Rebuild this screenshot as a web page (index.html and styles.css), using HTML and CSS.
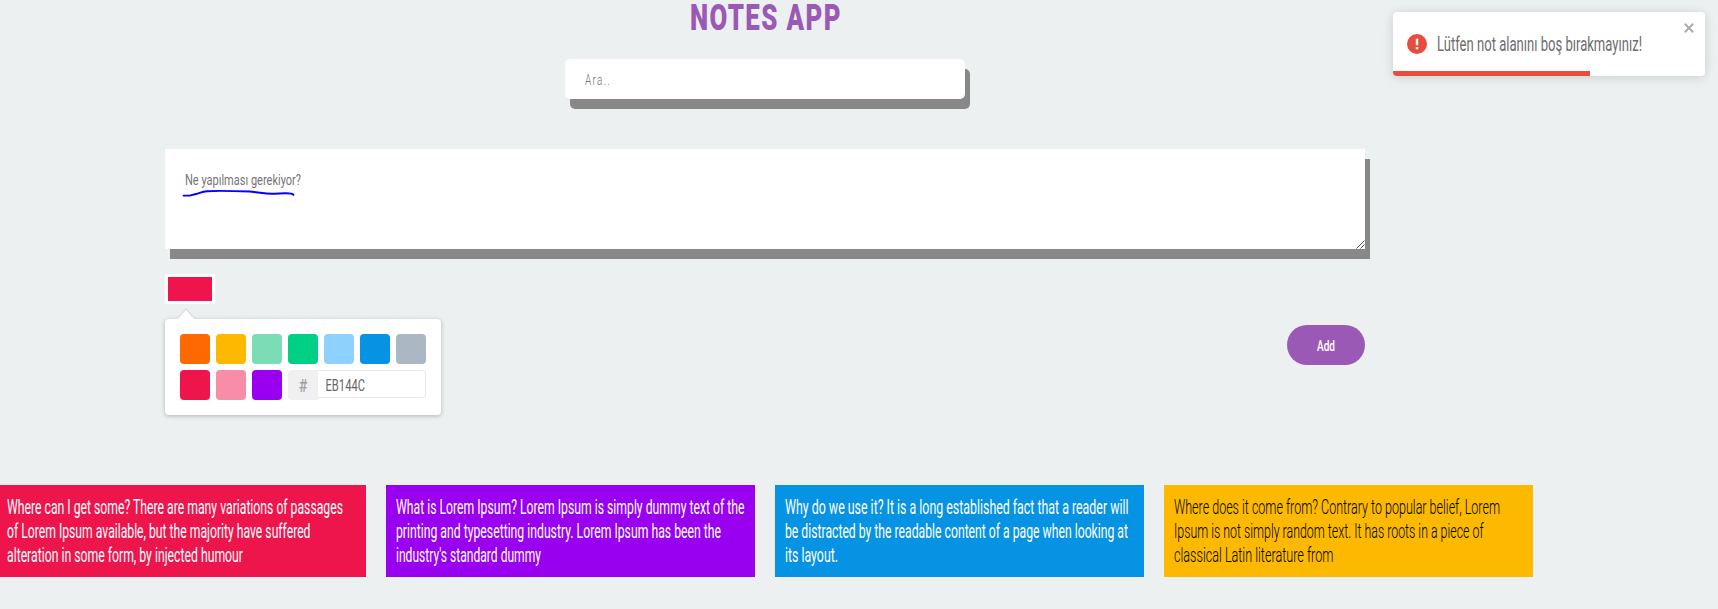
FILE: index.html
```html
<!DOCTYPE html>
<html lang="tr">
<head>
<meta charset="utf-8">
<title>Notes App</title>
<link rel="stylesheet" href="styles.css">
</head>
<body>
<main class="page">
  <h1 class="title"><svg class="line" width="150" height="48"><text x="-1" y="30" textLength="152" lengthAdjust="spacingAndGlyphs">NOTES APP</text></svg></h1>
  <div class="search"><svg class="line" width="100" height="40"><text x="0" y="26" textLength="26" lengthAdjust="spacingAndGlyphs">Ara..</text></svg></div>
  <section class="editor">
    <div class="note-input">
      <svg class="line" width="200" height="60"><text x="0" y="18.5" textLength="116" lengthAdjust="spacingAndGlyphs">Ne yapılması gerekiyor?</text><path class="squiggle" d="M-1.5 29.6H4.5L11 28C15 27 17 25.6 22 25.2C33 24.5 50 25 65 25.5L75 26.7Q84 28 89 27.7L100 27.2Q107 27 108.5 28.8"/></svg>
      <svg class="grip" width="9" height="9"><path d="M.5 8.5l8-8M4.5 8.5l4-4"/></svg>
    </div>
    <div class="current"></div>
    <div class="controls">
      <div class="picker">
        <svg class="arrow" width="20" height="12"><path class="edge" d="M0 11L10 0l10 11z"/><path class="fill" d="M1 12l9-10 9 10z"/></svg>
        <span class="swatch orange"></span><span class="swatch amber"></span><span class="swatch mint"></span><span class="swatch green"></span><span class="swatch sky"></span><span class="swatch blue"></span><span class="swatch gray"></span>
        <span class="swatch red"></span><span class="swatch pink"></span><span class="swatch purple"></span>
        <div class="hex">
          <div class="hash"><svg class="line" width="30" height="30"><text x="10.7" y="22" textLength="8.6" lengthAdjust="spacingAndGlyphs">#</text></svg></div>
          <div class="value"><svg class="line" width="90" height="26"><text x="7.5" y="19.5" textLength="39.5" lengthAdjust="spacingAndGlyphs">EB144C</text></svg></div>
        </div>
      </div>
      <div class="add"><svg class="line" width="18" height="40"><text x="0" y="26" textLength="18" lengthAdjust="spacingAndGlyphs">Add</text></svg></div>
    </div>
  </section>
  <section class="notes">
    <article class="note red"><svg class="line" width="349" height="72">
      <text x="0" y="19" textLength="336" lengthAdjust="spacingAndGlyphs">Where can I get some? There are many variations of passages</text>
      <text x="0" y="43" textLength="303.5" lengthAdjust="spacingAndGlyphs">of Lorem Ipsum available, but the majority have suffered</text>
      <text x="0" y="67" textLength="236" lengthAdjust="spacingAndGlyphs">alteration in some form, by injected humour</text></svg></article>
    <article class="note purple"><svg class="line" width="349" height="72">
      <text x="0" y="19" textLength="348.5" lengthAdjust="spacingAndGlyphs">What is Lorem Ipsum? Lorem Ipsum is simply dummy text of the</text>
      <text x="0" y="43" textLength="325" lengthAdjust="spacingAndGlyphs">printing and typesetting industry. Lorem Ipsum has been the</text>
      <text x="0" y="67" textLength="145" lengthAdjust="spacingAndGlyphs">industry's standard dummy</text></svg></article>
    <article class="note blue"><svg class="line" width="349" height="72">
      <text x="0" y="19" textLength="343.5" lengthAdjust="spacingAndGlyphs">Why do we use it? It is a long established fact that a reader will</text>
      <text x="0" y="43" textLength="343" lengthAdjust="spacingAndGlyphs">be distracted by the readable content of a page when looking at</text>
      <text x="0" y="67" textLength="53" lengthAdjust="spacingAndGlyphs">its layout.</text></svg></article>
    <article class="note amber"><svg class="line" width="349" height="72">
      <text x="0" y="19" textLength="326" lengthAdjust="spacingAndGlyphs">Where does it come from? Contrary to popular belief, Lorem</text>
      <text x="0" y="43" textLength="309.5" lengthAdjust="spacingAndGlyphs">Ipsum is not simply random text. It has roots in a piece of</text>
      <text x="0" y="67" textLength="159.5" lengthAdjust="spacingAndGlyphs">classical Latin literature from</text></svg></article>
  </section>
</main>
<aside class="toast">
  <svg class="alert" width="20" height="20"><circle cx="10" cy="10" r="10"/><path d="M8.8 4.8h2.4v6.5H8.8zM8.8 13h2.4v2.3H8.8z"/></svg>
  <svg class="line message" width="210" height="64"><text x="-1" y="39" textLength="205" lengthAdjust="spacingAndGlyphs">Lütfen not alanını boş bırakmayınız!</text></svg>
  <svg class="close" width="10" height="10"><path d="M.8.8l8.4 8.4M9.2.8L.8 9.2"/></svg>
  <div class="progress"></div>
</aside>
</body>
</html>
```
FILE: styles.css
```css
* { box-sizing: border-box; }
body {
  margin: 0;
  height: 609px;
  overflow: hidden;
  background: #ecf0f1;
  font-family: Roboto, "Liberation Sans", sans-serif;
}
.page { width: 1530px; }
.line { display: block; overflow: visible; }
.line text { fill: currentColor; }
.title {
  margin: 0 auto;
  width: 149px;
  height: 59px;
  color: #9b59b6;
  font-size: 36.5px;
  font-weight: 900;
  letter-spacing: 2px;
}
.search {
  width: 400px;
  height: 40px;
  margin: 0 auto;
  padding: 0 20px;
  background: #fff;
  border-radius: 5px;
  box-shadow: 5px 10px #888;
  color: #757575;
  font-size: 15.5px;
  font-weight: 300;
  letter-spacing: 2px;
}
.editor { width: 1200px; margin: 50px auto 0; }
.note-input {
  position: relative;
  height: 100px;
  padding: 17px 20px;
  background: #fff;
  box-shadow: 5px 10px #888;
  color: #757575;
  font-size: 15.5px;
}
.squiggle { fill: none; stroke: #0000fe; stroke-width: 1.9; stroke-linecap: round; stroke-linejoin: round; }
.grip { position: absolute; right: 0; bottom: 0; fill: none; stroke: #555; }
.current {
  width: 50px;
  height: 30px;
  margin-top: 25px;
  border: 3px solid #fff;
  background: #ee144c;
}
.controls {
  display: flex;
  justify-content: space-between;
  align-items: flex-start;
  margin-top: 15px;
}
.picker {
  position: relative;
  display: grid;
  grid-template-columns: repeat(7, 30px);
  grid-auto-rows: 30px;
  gap: 6px;
  width: 276px;
  height: 96px;
  padding: 15px;
  background: #fff;
  border-radius: 4px;
  box-shadow: 0 1px 4px rgba(0, 0, 0, .25);
}
.arrow { position: absolute; left: 11px; top: -11px; }
.arrow .edge { fill: #dcdfe0; }
.arrow .fill { fill: #fff; }
.swatch { border-radius: 4px; }
.orange { background: #ff6900; }
.amber { background: #fcb900; }
.mint { background: #7bdcb5; }
.green { background: #00d084; }
.sky { background: #8ed1fc; }
.blue { background: #0693e3; }
.gray { background: #abb8c3; }
.red { background: #ee144c; }
.pink { background: #f78da7; }
.purple { background: #9900ef; }
.hex { grid-column: span 4; display: flex; align-items: flex-start; }
.hash {
  width: 30px;
  height: 30px;
  border-radius: 4px 0 0 4px;
  background: #f0f0f0;
  color: #98a1a4;
  font-size: 19px;
  font-weight: 500;
}
.value {
  width: 108px;
  height: 28px;
  border: 1px solid #eaeaea;
  border-left: 0;
  border-radius: 0 4px 4px 0;
  color: #666;
  font-size: 16px;
}
.add {
  display: flex;
  justify-content: center;
  width: 78px;
  height: 40px;
  margin-top: 6px;
  border-radius: 20px;
  background: #9b59b6;
  color: #fff;
  font-size: 15.5px;
  font-weight: 500;
}
.notes {
  display: grid;
  grid-template-columns: repeat(4, 369px);
  gap: 20px;
  margin: 70px 0 0 -3px;
}
.note {
  height: 92px;
  padding: 10px;
  color: #fff;
  font-size: 19.3px;
}
.note.amber { color: #000; font-weight: 300; }
.toast {
  position: absolute;
  left: 1393px;
  top: 12px;
  display: flex;
  align-items: center;
  width: 312px;
  height: 64px;
  padding-left: 14px;
  background: #fff;
  border-radius: 4px;
  box-shadow: 0 1px 10px rgba(0, 0, 0, .1), 0 2px 15px rgba(0, 0, 0, .05);
  color: #6c6c6c;
  font-size: 19.6px;
}
.alert circle { fill: #e74c3c; }
.alert path { fill: #fff; }
.message { margin-left: 11px; }
.close { position: absolute; right: 11px; top: 11px; fill: none; stroke: #aaa; stroke-width: 2; }
.progress {
  position: absolute;
  left: 0;
  bottom: 0;
  width: 197px;
  height: 5px;
  border-bottom-left-radius: 4px;
  background: #e74c3c;
}
```
